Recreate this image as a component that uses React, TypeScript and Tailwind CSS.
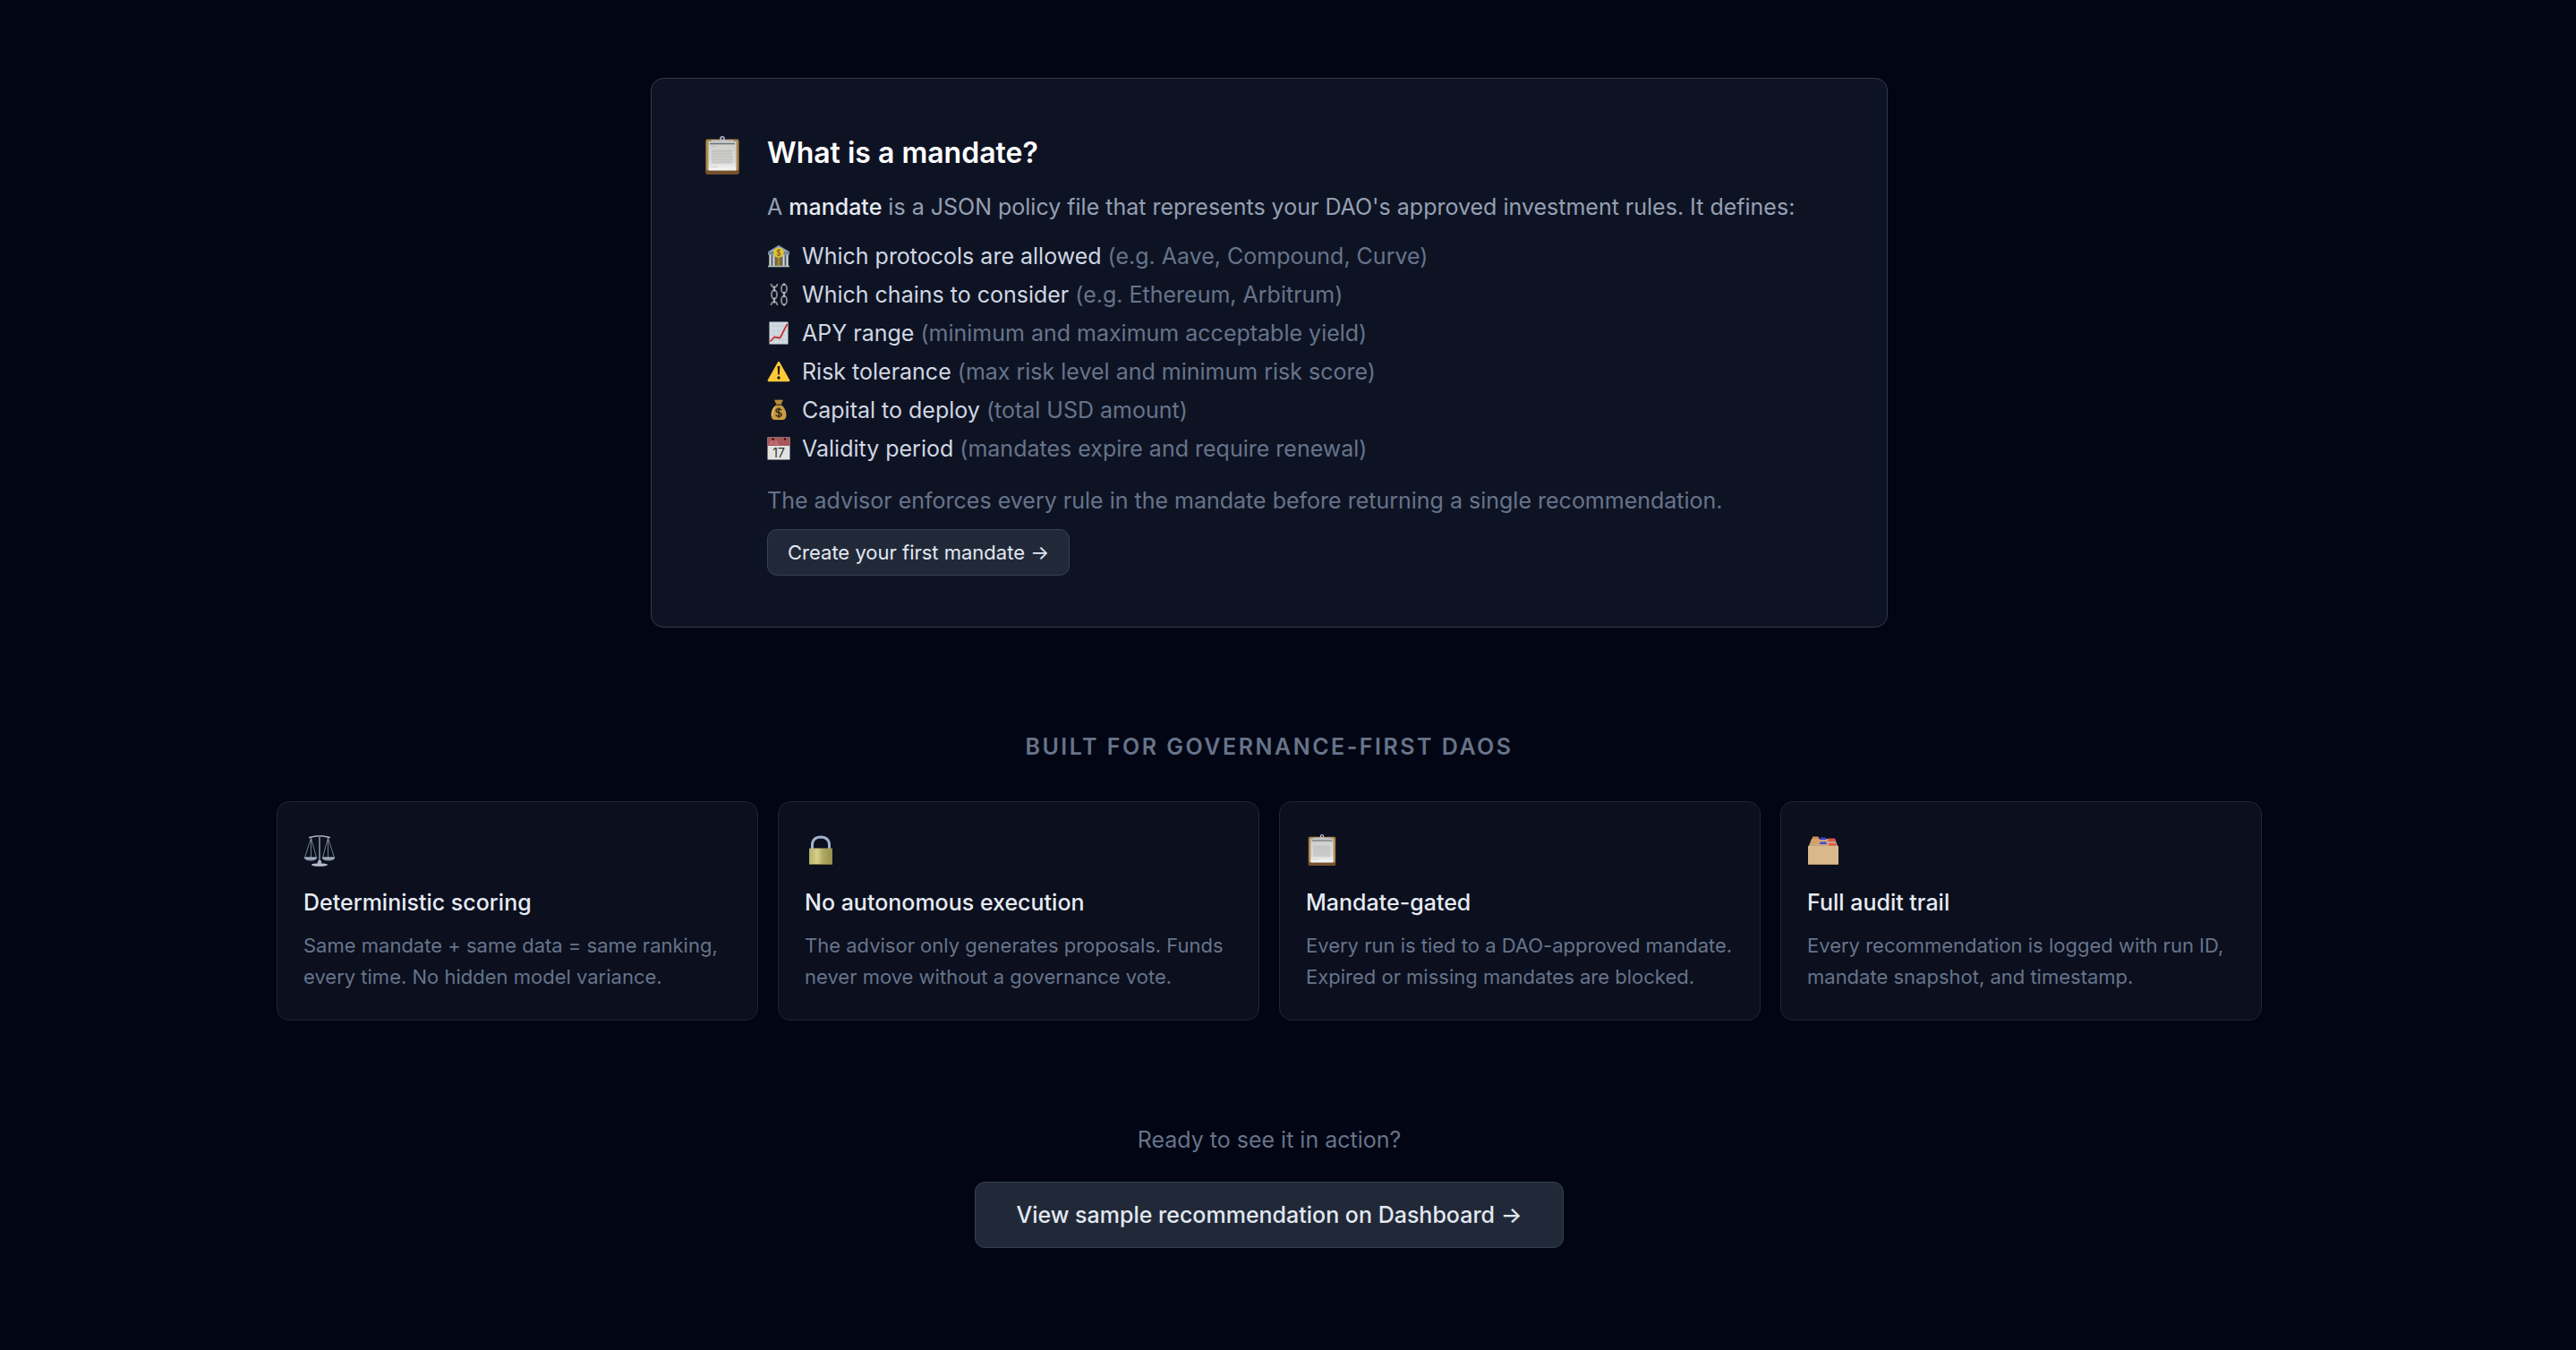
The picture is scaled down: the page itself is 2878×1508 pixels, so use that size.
import type { ReactNode } from 'react';

type IconProps = { className?: string };

const ClipboardIcon = ({ className }: IconProps) => (
    <svg viewBox="0 0 44 44" className={className} aria-hidden="true">
        <defs>
            <linearGradient id="paper" x1="0" y1="0" x2="0" y2="1">
                <stop offset="0" stopColor="#cfcfce" />
                <stop offset="0.7" stopColor="#dadad9" />
                <stop offset="1" stopColor="#f8f8f8" />
            </linearGradient>
        </defs>
        <rect x="3.5" y="3.5" width="37" height="39" rx="2" fill="#b08a4d" />
        <rect x="3.5" y="38" width="37" height="4.5" rx="1.5" fill="#75522a" />
        <rect x="6.5" y="6" width="31" height="32.5" fill="url(#paper)" />
        <rect x="10" y="15" width="23" height="16" fill="#a5a5a5" opacity="0.2" />
        <path
            d="M9 11.5h6M10 17h24M10 20h22M10 23h24M10 26h25M10 29h23M9 34.5h8"
            stroke="#a8a8a8"
            strokeWidth="0.7"
            opacity="0.5"
        />
        <path d="M8 8.6 10 4.5h24l2 4.1z" fill="#c3c7cc" />
        <path d="M8 8.6h28" stroke="#6c7370" strokeWidth="1.4" />
        <circle cx="22" cy="2.8" r="2" fill="none" stroke="#b9c3d3" strokeWidth="1.5" />
    </svg>
);

const BankIcon = ({ className }: IconProps) => (
    <svg viewBox="0 0 26 26" className={className} aria-hidden="true">
        <path d="M1 8 13 .8 25 8v3H1z" fill="#6f8494" />
        <path d="M2 8.2 13 2l11 6.2z" fill="#9aabb5" />
        <rect x="2" y="10.5" width="22" height="13.5" fill="#50606c" />
        <path d="M3.5 11v13M7.5 11v13M18.5 11v13M22.5 11v13" stroke="#d5d9d6" strokeWidth="2" />
        <rect x="9.5" y="14" width="7" height="10" fill="#7e6b32" />
        <path d="M13 15v9" stroke="#c5a53c" />
        <path d="M1 11h24" stroke="#8ea0aa" strokeWidth="1.2" />
        <path d="M1 24.5h24" stroke="#b6beb9" strokeWidth="1.6" />
        <circle cx="13" cy="9.2" r="5.6" fill="#e8c52e" />
        <path
            d="M15.2 7.2c-.5-.8-1.2-1-2.2-1-1.2 0-2.1.6-2.1 1.5 0 2.1 4.3 1 4.3 3.1 0 .9-.9 1.6-2.2 1.6-1.1 0-1.9-.4-2.3-1.2M13 5.2v8.2"
            fill="none"
            stroke="#6b5715"
        />
    </svg>
);

const ChainsIcon = ({ className }: IconProps) => (
    <svg viewBox="0 0 26 26" className={className} aria-hidden="true">
        <g fill="none" stroke="#858b90" strokeWidth="1.9">
            <path d="M4.5 1c.3 2.6 1.4 3.9 3.5 3.9S11.2 3.6 11.5 1" />
            <ellipse cx="8" cy="13" rx="3" ry="5" />
            <path d="M4.5 25c.3-2.6 1.4-3.9 3.5-3.9s3.2 1.3 3.5 3.9" />
            <ellipse cx="19" cy="6.5" rx="3" ry="5" />
            <ellipse cx="19" cy="19.5" rx="3" ry="5" />
        </g>
        <path
            d="M8 4v5M8 17v5M19 10.5v5M19 1v1.5M19 24v1"
            stroke="#c9cdd0"
            strokeWidth="1.5"
            strokeLinecap="round"
        />
    </svg>
);

const ChartIcon = ({ className }: IconProps) => (
    <svg viewBox="0 0 26 26" className={className} aria-hidden="true">
        <rect x="2.5" y=".5" width="21" height="25" fill="#d3dbe0" />
        <path
            d="M2.5 5.5h21M2.5 10.5h21M2.5 15.5h21M2.5 20.5h21M7.5.5v25M12.5.5v25M17.5.5v25"
            stroke="#b9c7d1"
            strokeWidth=".6"
        />
        <path d="m3.5 22.5 4.5-5 6.500 1L22.5 3" fill="none" stroke="#c4353a" strokeWidth="1.8" strokeLinejoin="round" />
    </svg>
);

const WarningIcon = ({ className }: IconProps) => (
    <svg viewBox="0 0 26 26" className={className} aria-hidden="true">
        <path d="M13 3 24.2 23H1.8z" fill="#fcca3a" stroke="#fcca3a" strokeWidth="2.4" strokeLinejoin="round" />
        <path d="M11.6 7h2.8l-.6 9.5h-1.6z" fill="#1d1a12" />
        <circle cx="13" cy="20" r="1.7" fill="#1d1a12" />
    </svg>
);

const MoneyBagIcon = ({ className }: IconProps) => (
    <svg viewBox="0 0 26 26" className={className} aria-hidden="true">
        <path d="M8 1.5c2 1 3-.5 5 .3 2-.8 3 .7 5-.3l-2.5 5.7h-5z" fill="#b78b3b" />
        <path
            d="M10 7.500h6c3.500 2.700 5.700 7.500 5.500 11.500-.2 3.500-1.800 5-4 5h-9c-2.200 0-3.800-1.500-4-5-.2-4 2-8.800 5.500-11.500z"
            fill="#c89a43"
        />
        <path d="M9 9.5C6.5 12 5.7 16 6 19" fill="none" stroke="#e3c176" strokeWidth="1.5" />
        <path d="M9.8 7.3h6.4" stroke="#5e4420" strokeWidth="1.6" />
        <path
            d="M16 13.3c-.6-1-1.6-1.5-3-1.5-1.7 0-2.9.8-2.9 2 0 2.9 6 1.4 6 4.3 0 1.3-1.2 2.1-3.1 2.1-1.5 0-2.7-.6-3.2-1.7M13 10.3v11.4"
            fill="none"
            stroke="#3a2b12"
            strokeWidth="1.5"
        />
    </svg>
);

const CalendarIcon = ({ className }: IconProps) => (
    <svg viewBox="0 0 26 26" className={className} aria-hidden="true">
        <rect x=".5" y=".5" width="25" height="25" fill="#e2e2e0" />
        <rect x=".5" y=".5" width="25" height="9.5" fill="#a9565a" />
        <circle cx="6.5" cy="2.5" r="1.3" fill="#2a1418" />
        <circle cx="20" cy="2.5" r="1.3" fill="#2a1418" />
        <text x="2" y="9.3" fontSize="6" fill="#d69a9b" className="font-['Inter',sans-serif]">JUL</text>
        <text x="13" y="22.5" fontSize="14" textAnchor="middle" fill="#333333" className="font-['Inter',sans-serif]">17</text>
    </svg>
);

const ScalesIcon = ({ className }: IconProps) => (
    <svg viewBox="0 0 36 36" className={className} aria-hidden="true">
        <path
            d="M8.5 4 1.5 26M8.5 4v22M8.5 4l6 22M27.5 4l-6 22M27.5 4v22M27.5 4l7 22"
            fill="none"
            stroke="#8a98a6"
            strokeWidth=".8"
        />
        <path d="M6 3.500c4 0 5-1.700 12-1.700s8 1.700 12 1.700" fill="none" stroke="#a9b3bd" strokeWidth="1.5" />
        <path d="M18 1v32" stroke="#71859a" strokeWidth="1.8" />
        <path
            d="M.5 25.500h15c-.5 2.500-3 4-7.500 4s-7-1.500-7.500-4zM20.500 25.500h15c-.5 2.500-3 4-7.500 4s-7-1.500-7.500-4z"
            fill="#8797a8"
        />
        <path d="M2 26.2h12M22 26.2h12" stroke="#ccd3da" strokeWidth=".9" />
        <path d="M16.5 29h3l1 3.5h-5z" fill="#a4b4c6" />
        <ellipse cx="18" cy="34" rx="9" ry="1.8" fill="#b4c0ce" />
    </svg>
);

const LockIcon = ({ className }: IconProps) => (
    <svg viewBox="0 0 36 36" className={className} aria-hidden="true">
        <defs>
            <linearGradient id="brass" x1="0" x2="1">
                <stop offset="0" stopColor="#b5af68" />
                <stop offset="0.35" stopColor="#d6d08b" />
                <stop offset="0.6" stopColor="#b0a862" />
                <stop offset="1" stopColor="#968e4d" />
            </linearGradient>
        </defs>
        <path d="M8.5 17v-5c0-5.500 3.500-9 9.500-9s9.500 3.500 9.500 9v5" fill="none" stroke="#9fb3d0" strokeWidth="3" />
        <rect x="5" y="15.5" width="26" height="18.500" rx=".8" fill="url(#brass)" />
        <path d="M5 33.500h26" stroke="#7b7138" />
    </svg>
);

const DividersIcon = ({ className }: IconProps) => (
    <svg viewBox="0 0 36 36" className={className} aria-hidden="true">
        <path d="M5 5h26l3.500 9H1.500z" fill="#c9a77c" />
        <path d="M6 2.500h6.500l1 3h-8z" fill="#d98d49" />
        <path d="M14.500 3.500H21l.5 2.500h-7.500z" fill="#3b3fcf" />
        <path d="M23.500 4.500H31l1 3.500h-8.500z" fill="#d9534f" />
        <path d="M4 9.500 5 7h7.500l.5 2.500z" fill="#e19a55" />
        <path d="m14 11 .5-2.500H21l1 2.500z" fill="#4247e0" />
        <path d="m24 12.500.5-2.500h7l1.500 2.500z" fill="#e2504b" />
        <path d="M1 13h34v19.500c0 1-.5 1.500-1.500 1.500h-31C1.500 34 1 33.500 1 32.500z" fill="#d9b98c" />
        <path d="M1.500 33.500h33" stroke="#b3925f" />
    </svg>
);

const rules: { icon: ReactNode; label: string; hint: string }[] = [
    { icon: <BankIcon className="size-[26px]" />, label: 'Which protocols are allowed', hint: '(e.g. Aave, Compound, Curve)' },
    { icon: <ChainsIcon className="size-[26px]" />, label: 'Which chains to consider', hint: '(e.g. Ethereum, Arbitrum)' },
    { icon: <ChartIcon className="size-[26px]" />, label: 'APY range', hint: '(minimum and maximum acceptable yield)' },
    { icon: <WarningIcon className="size-[26px]" />, label: 'Risk tolerance', hint: '(max risk level and minimum risk score)' },
    { icon: <MoneyBagIcon className="size-[26px]" />, label: 'Capital to deploy', hint: '(total USD amount)' },
    { icon: <CalendarIcon className="size-[26px]" />, label: 'Validity period', hint: '(mandates expire and require renewal)' },
];

const features: { icon: ReactNode; title: string; text: string }[] = [
    {
        icon: <ScalesIcon className="size-9" />,
        title: 'Deterministic scoring',
        text: 'Same mandate + same data = same ranking, every time. No hidden model variance.',
    },
    {
        icon: <LockIcon className="size-9" />,
        title: 'No autonomous execution',
        text: 'The advisor only generates proposals. Funds never move without a governance vote.',
    },
    {
        icon: <ClipboardIcon className="size-9" />,
        title: 'Mandate-gated',
        text: 'Every run is tied to a DAO-approved mandate. Expired or missing mandates are blocked.',
    },
    {
        icon: <DividersIcon className="size-9" />,
        title: 'Full audit trail',
        text: 'Every recommendation is logged with run ID, mandate snapshot, and timestamp.',
    },
];

const App = () => {
    return (
        <main className="flex min-h-screen flex-col items-center bg-[#020513] pt-[87px] pr-[42px] font-['Inter',sans-serif] text-[25px] leading-9">
            <section className="flex w-full max-w-[1382px] items-start gap-7 rounded-[14px] border border-[#303b4f] bg-[#0e1324] p-[57px]">
                <ClipboardIcon className="mt-[7px] size-11 shrink-0" />
                <div className="flex flex-col items-start">
                    <h2 className="text-[32px] leading-[52px] font-semibold text-white">What is a mandate?</h2>
                    <p className="mt-[14px] leading-[41px] text-[#94a0b3]">
                        A <strong className="font-medium text-[#e6ebf2]">mandate</strong> is a JSON policy file that
                        represents your DAO's approved investment rules. It defines:
                    </p>
                    <ul className="mt-4 flex flex-col gap-[7px]">
                        {rules.map((rule) => (
                            <li key={rule.label} className="flex items-center gap-[13px] text-[#d0d7e2]">
                                {rule.icon}
                                <span>
                                    {rule.label} <span className="text-[#66748a]">{rule.hint}</span>
                                </span>
                            </li>
                        ))}
                    </ul>
                    <p className="mt-[22px] text-[#66748a]">
                        The advisor enforces every rule in the mandate before returning a single recommendation.
                    </p>
                    <a
                        href="#create"
                        className="mt-[14px] rounded-[11px] border border-[#364153] bg-[#212939] px-[22px] py-[11px] text-[22px] leading-7 text-[#e2e8f0]"
                    >
                        Create your first mandate →
                    </a>
                </div>
            </section>

            <section className="mt-[115px] flex w-full max-w-[2218px] flex-col items-center">
                <h2 className="font-semibold tracking-widest text-[#66748a] uppercase">Built for governance-first DAOs</h2>
                <div className="mt-[43px] grid w-full grid-cols-4 gap-[22px]">
                    {features.map((feature) => (
                        <article key={feature.title} className="rounded-[14px] border border-[#1f2636] bg-[#0b0f1e] px-[29px] pt-9 pb-[30px]">
                            {feature.icon}
                            <h3 className="mt-[22px] font-medium text-[#e6ebf2]">{feature.title}</h3>
                            <p className="mt-[13px] text-[22px] leading-[35px] text-[#66748a]">{feature.text}</p>
                        </article>
                    ))}
                </div>
            </section>

            <section className="mt-[115px] flex flex-col items-center">
                <p className="text-[#66748a]">Ready to see it in action?</p>
                <a
                    href="#dashboard"
                    className="mt-[29px] rounded-[11px] border border-[#364153] bg-[#212939] px-[45px] py-[18px] font-medium text-[#e2e8f0]"
                >
                    View sample recommendation on Dashboard →
                </a>
            </section>
        </main>
    );
};

export default App;
